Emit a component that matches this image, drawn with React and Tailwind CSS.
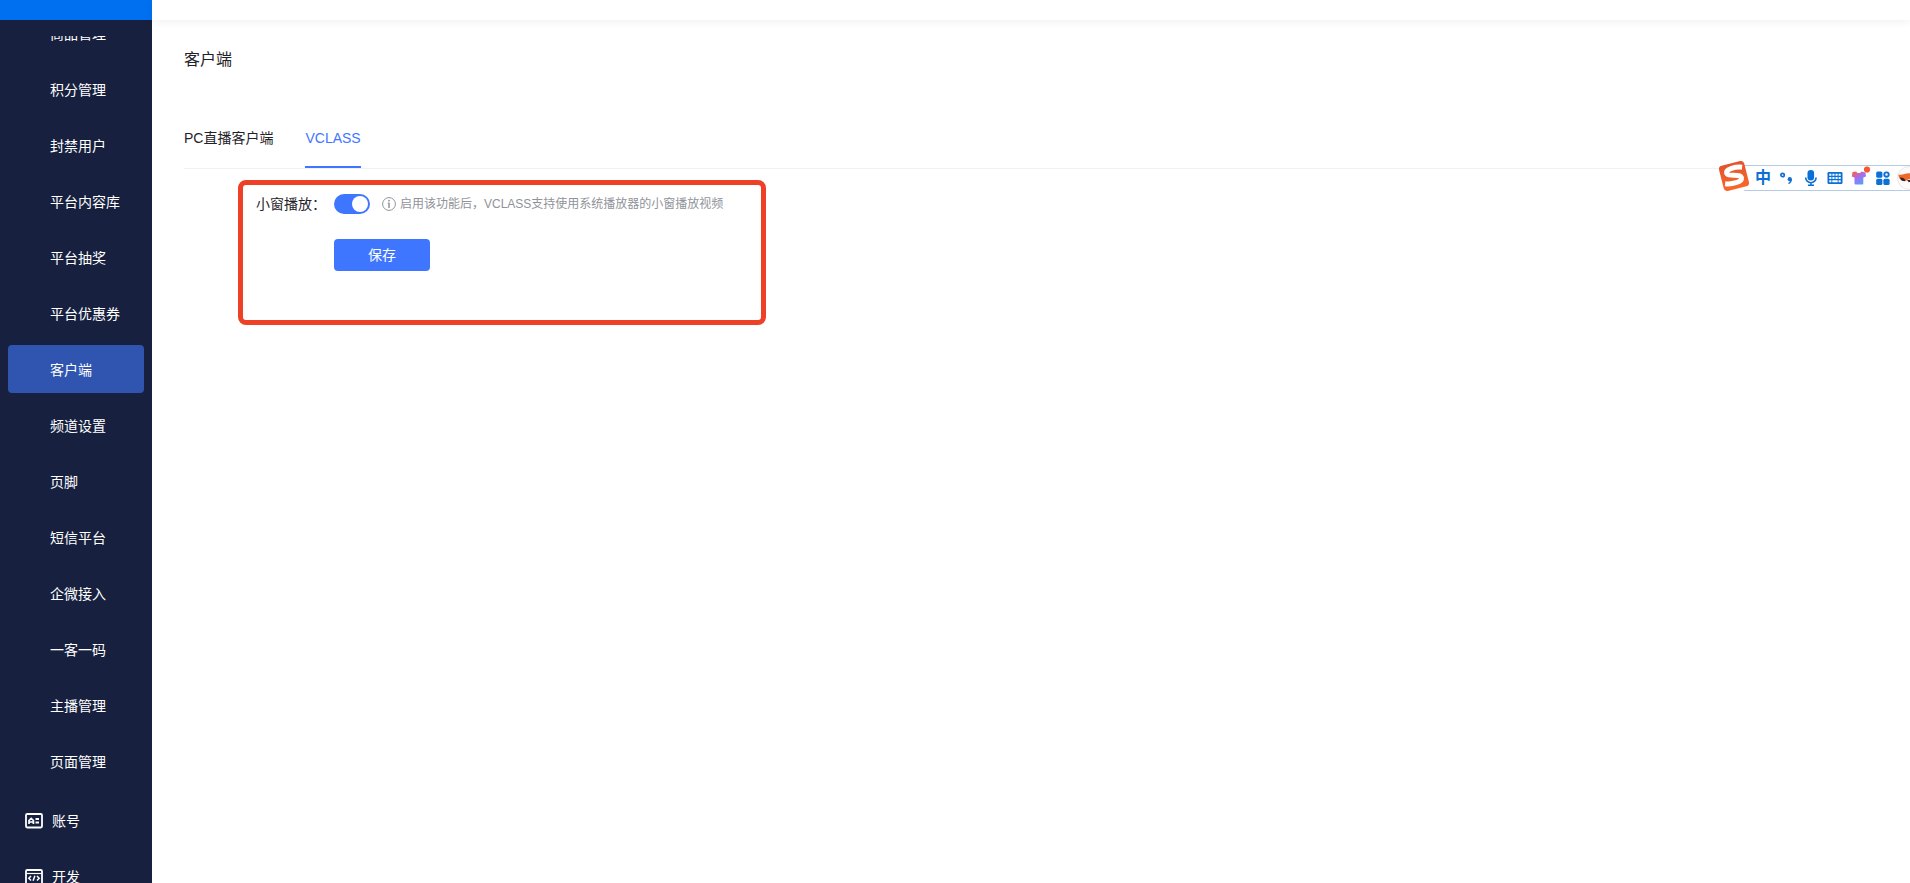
import { useState } from "react";

const menuItems = [
  "商品管理",
  "积分管理",
  "封禁用户",
  "平台内容库",
  "平台抽奖",
  "平台优惠券",
  "客户端",
  "频道设置",
  "页脚",
  "短信平台",
  "企微接入",
  "一客一码",
  "主播管理",
  "页面管理",
];

const tabs = ["PC直播客户端", "VCLASS"];

function AccountIcon() {
  return (
    <svg width="18" height="16" viewBox="0 0 18 16" fill="none" stroke="#fff">
      <rect x="1" y="1" width="16" height="13.5" rx="1.2" strokeWidth="1.8" />
      <path d="M4 11V7.5L6.2 5.4L8.4 7.5V11M4 9H8.4" strokeWidth="1.7" />
      <path d="M10.5 6H14M10.5 9.5H14" strokeWidth="1.8" />
    </svg>
  );
}

function DevIcon() {
  return (
    <svg width="18" height="16" viewBox="0 0 18 16" fill="none" stroke="#fff">
      <rect x="1" y="1" width="16" height="14" rx="1.2" strokeWidth="1.8" />
      <path d="M1 4.5H17" strokeWidth="1.2" />
      <path
        d="M6 7L3.8 9.3L6 11.6M12 7L14.2 9.3L12 11.6M9.9 6.8L8.1 11.8"
        strokeWidth="1.5"
      />
    </svg>
  );
}

function InfoIcon() {
  return (
    <svg width="14" height="14" viewBox="0 0 14 14" fill="none" stroke="#909399">
      <circle cx="7" cy="7" r="6.4" />
      <path d="M7 5.7V11" strokeWidth="1.5" />
      <path d="M5.6 6.2H7.4" strokeWidth="0.8" />
      <circle cx="7" cy="3.7" r="0.9" fill="#909399" stroke="none" />
    </svg>
  );
}

function Sidebar() {
  const [active, setActive] = useState("客户端");

  return (
    <aside className="flex w-38 shrink-0 flex-col bg-[#17213f] text-sm text-white">
      <div className="h-5 shrink-0 bg-[#0070f0]" />
      <nav className="mt-4 min-h-0 flex-1 overflow-hidden px-2">
        {/* list is scrolled down a little */}
        <ul className="-mt-[27px] flex flex-col gap-2">
          {menuItems.map((item) => (
            <li key={item}>
              <a
                href="#"
                onClick={() => setActive(item)}
                className={`flex h-12 items-center rounded pt-0.5 pl-[42px] ${
                  item === active ? "bg-[#2f55b0]" : ""
                }`}
              >
                {item}
              </a>
            </li>
          ))}
        </ul>
        <ul className="mt-3 flex flex-col gap-2">
          <li>
            <a href="#" className="flex h-12 items-center gap-[9px] pl-[17px]">
              <AccountIcon />
              账号
            </a>
          </li>
          <li>
            <a href="#" className="flex h-12 items-center gap-[9px] pl-[17px]">
              <DevIcon />
              开发
            </a>
          </li>
        </ul>
      </nav>
    </aside>
  );
}

function LogoIcon() {
  return (
    <svg className="z-10 shrink-0" width="32" height="36" viewBox="0 0 32 36">
      <defs>
        <linearGradient id="logoFill" x1="0" y1="0" x2="0" y2="1">
          <stop offset="0" stopColor="#e4532c" />
          <stop offset="1" stopColor="#f8682c" />
        </linearGradient>
      </defs>
      <g transform="rotate(-14 16 16)">
        <rect x="3" y="3" width="26" height="26" rx="3.5" fill="url(#logoFill)" />
        <path
          d="M26 9.4C20 7.200 9.500 7 9.500 11.300C9.500 15.800 23 14.600 22.800 19.600C22.500 24 11.500 23.700 5.500 21.300"
          fill="none"
          stroke="#fff"
          strokeWidth="5"
        />
      </g>
    </svg>
  );
}

function PunctuationIcon() {
  return (
    <svg width="16" height="16" viewBox="0 0 16 16">
      <circle cx="3.6" cy="5" r="1.7" fill="none" stroke="#0b6fd6" strokeWidth="1.7" />
      <circle cx="10.8" cy="9.2" r="2.1" fill="#0b6fd6" />
      <path d="M12.9 9C13 11.8 11.8 13.5 9.6 14L9.2 13C10.5 12.5 11 11.7 11 10.5Z" fill="#0b6fd6" />
    </svg>
  );
}

function MicIcon() {
  return (
    <svg width="16" height="16" viewBox="0 0 16 16">
      <rect x="4.5" y="0" width="6.6" height="10.6" rx="3.3" fill="#0b6fd6" />
      <path
        d="M2.7 7.5a5.2 5.2 0 0 0 10.4 0M7.9 12.5V15M4.9 15.2H11"
        fill="none"
        stroke="#0b6fd6"
        strokeWidth="1.6"
      />
    </svg>
  );
}

function KeyboardIcon() {
  return (
    <svg width="16" height="16" viewBox="0 0 16 16">
      <rect x="0.5" y="2" width="15" height="12" rx="1.3" fill="#0b6fd6" />
      <path d="M2.3 4.7H13.7M2.3 8H13.7" stroke="#fff" strokeWidth="2" strokeDasharray="2.1 1" />
      <path d="M2.3 11.2H4.4M5.3 11.2H10.7M11.6 11.2H13.7" stroke="#fff" strokeWidth="2" />
    </svg>
  );
}

function SkinIcon() {
  return (
    <svg className="overflow-visible" width="16" height="16" viewBox="0 0 16 16">
      <defs>
        <linearGradient id="skinFill" x1="0" y1="0" x2="0.7" y2="1">
          <stop offset="0.1" stopColor="#f4604f" />
          <stop offset="0.5" stopColor="#a96bf0" />
          <stop offset="1" stopColor="#4fa3ff" />
        </linearGradient>
      </defs>
      <path
        d="M1.5 2L5.2 1.5C6 3.5 9.5 3.5 10.3 1.5L14.5 2.5L15 6.5L12.3 7.5V13.5Q12.3 14.5 11.3 14.5H4.5Q3.5 14.5 3.5 13.5V7.5L0.8 6.5Z"
        fill="url(#skinFill)"
      />
      <circle cx="16" cy="-0.5" r="3.1" fill="#fa5530" />
    </svg>
  );
}

function AppsIcon() {
  return (
    <svg width="16" height="16" viewBox="0 0 16 16" fill="#0b6fd6">
      <rect x="1.2" y="1.5" width="6.2" height="6.2" rx="1.5" />
      <rect x="1.2" y="8.7" width="6.2" height="6.2" rx="1.5" />
      <rect x="8.4" y="8.7" width="6.2" height="6.2" rx="1.5" />
      <circle cx="11.5" cy="4.6" r="2.2" fill="#fff" stroke="#0b6fd6" strokeWidth="1.9" />
    </svg>
  );
}

function FoxIcon() {
  return (
    <svg className="-ml-0.5 shrink-0" width="24" height="24" viewBox="0 0 24 24">
      <circle cx="12" cy="12" r="11.5" fill="#fcfafa" stroke="#e6e1e1" strokeWidth="0.8" />
      <path
        d="M1.5 8.5C5 9.500 8 7.3 12 7.3S19 9.500 22.5 8.5C22.5 13 19 16 15.5 15L12 13L8.5 15C5 16 1.5 13 1.5 8.5Z"
        fill="#ee6a2c"
      />
      <path d="M3 11.5C5 11 7.5 12 8.5 14.5C6 16 3.8 14.5 3 11.5Z" fill="#30262a" />
      <path d="M10 14L14 14L12 16.5Z" fill="#30262a" />
    </svg>
  );
}

function ImeToolbar() {
  return (
    <div className="absolute top-[165px] right-0 flex h-[26px] w-48 items-center">
      <LogoIcon />
      <div className="-ml-1.5 flex h-full flex-1 items-center gap-2 border-y border-[#b3cbe5] bg-white pl-[11px] text-[#0b6fd6]">
        <span className="w-4 text-center text-base leading-6 font-bold">中</span>
        <PunctuationIcon />
        <MicIcon />
        <KeyboardIcon />
        <SkinIcon />
        <AppsIcon />
        <FoxIcon />
      </div>
    </div>
  );
}

function SettingsForm() {
  const [pip, setPip] = useState(true);

  return (
    <form
      onSubmit={(e) => e.preventDefault()}
      className="mt-[11px] ml-[54px] w-[528px] max-w-full rounded-lg border-5 border-[#ee4027] px-[13px] pt-2 pb-[49px]"
    >
      <div className="flex h-[22px] items-center gap-2">
        <label htmlFor="pip" className="w-[70px] text-sm">
          小窗播放：
        </label>
        <input
          id="pip"
          type="checkbox"
          role="switch"
          checked={pip}
          onChange={(e) => setPip(e.target.checked)}
          className="h-5 w-9 shrink-0 appearance-none rounded-full bg-gray-300 p-0.5 before:block before:size-4 before:rounded-full before:bg-white checked:bg-[#3f76ff] checked:before:ml-4"
        />
        <p className="ml-1 flex items-center gap-1 text-xs text-[#909399]">
          <InfoIcon />
          启用该功能后，VCLASS支持使用系统播放器的小窗播放视频
        </p>
      </div>
      <button
        type="submit"
        className="mt-6 ml-[78px] block h-8 w-24 rounded bg-[#3f76ff] text-sm text-white"
      >
        保存
      </button>
    </form>
  );
}

function App() {
  const [tab, setTab] = useState("VCLASS");

  return (
    <div className="relative flex h-screen overflow-hidden bg-white font-['Liberation_Sans','Noto_Sans_CJK_SC',sans-serif] text-[#1f2329]">
      <Sidebar />
      <div className="flex min-w-0 flex-1 flex-col">
        <header className="h-5 shrink-0 shadow-[0_2px_8px_rgba(0,0,0,0.06)]" />
        <main className="flex-1 px-8 pt-7">
          <h1 className="text-base">客户端</h1>
          <div className="mt-9 flex gap-8 border-b border-[#f0f1f3]">
            {tabs.map((name) => (
              <button
                key={name}
                type="button"
                onClick={() => setTab(name)}
                className={`h-[60px] border-b-2 pt-0.5 text-sm ${
                  name === tab
                    ? "border-[#3f76ff] text-[#3f76ff]"
                    : "border-transparent"
                }`}
              >
                {name}
              </button>
            ))}
          </div>
          <SettingsForm />
        </main>
      </div>
      <ImeToolbar />
    </div>
  );
}

export default App;
